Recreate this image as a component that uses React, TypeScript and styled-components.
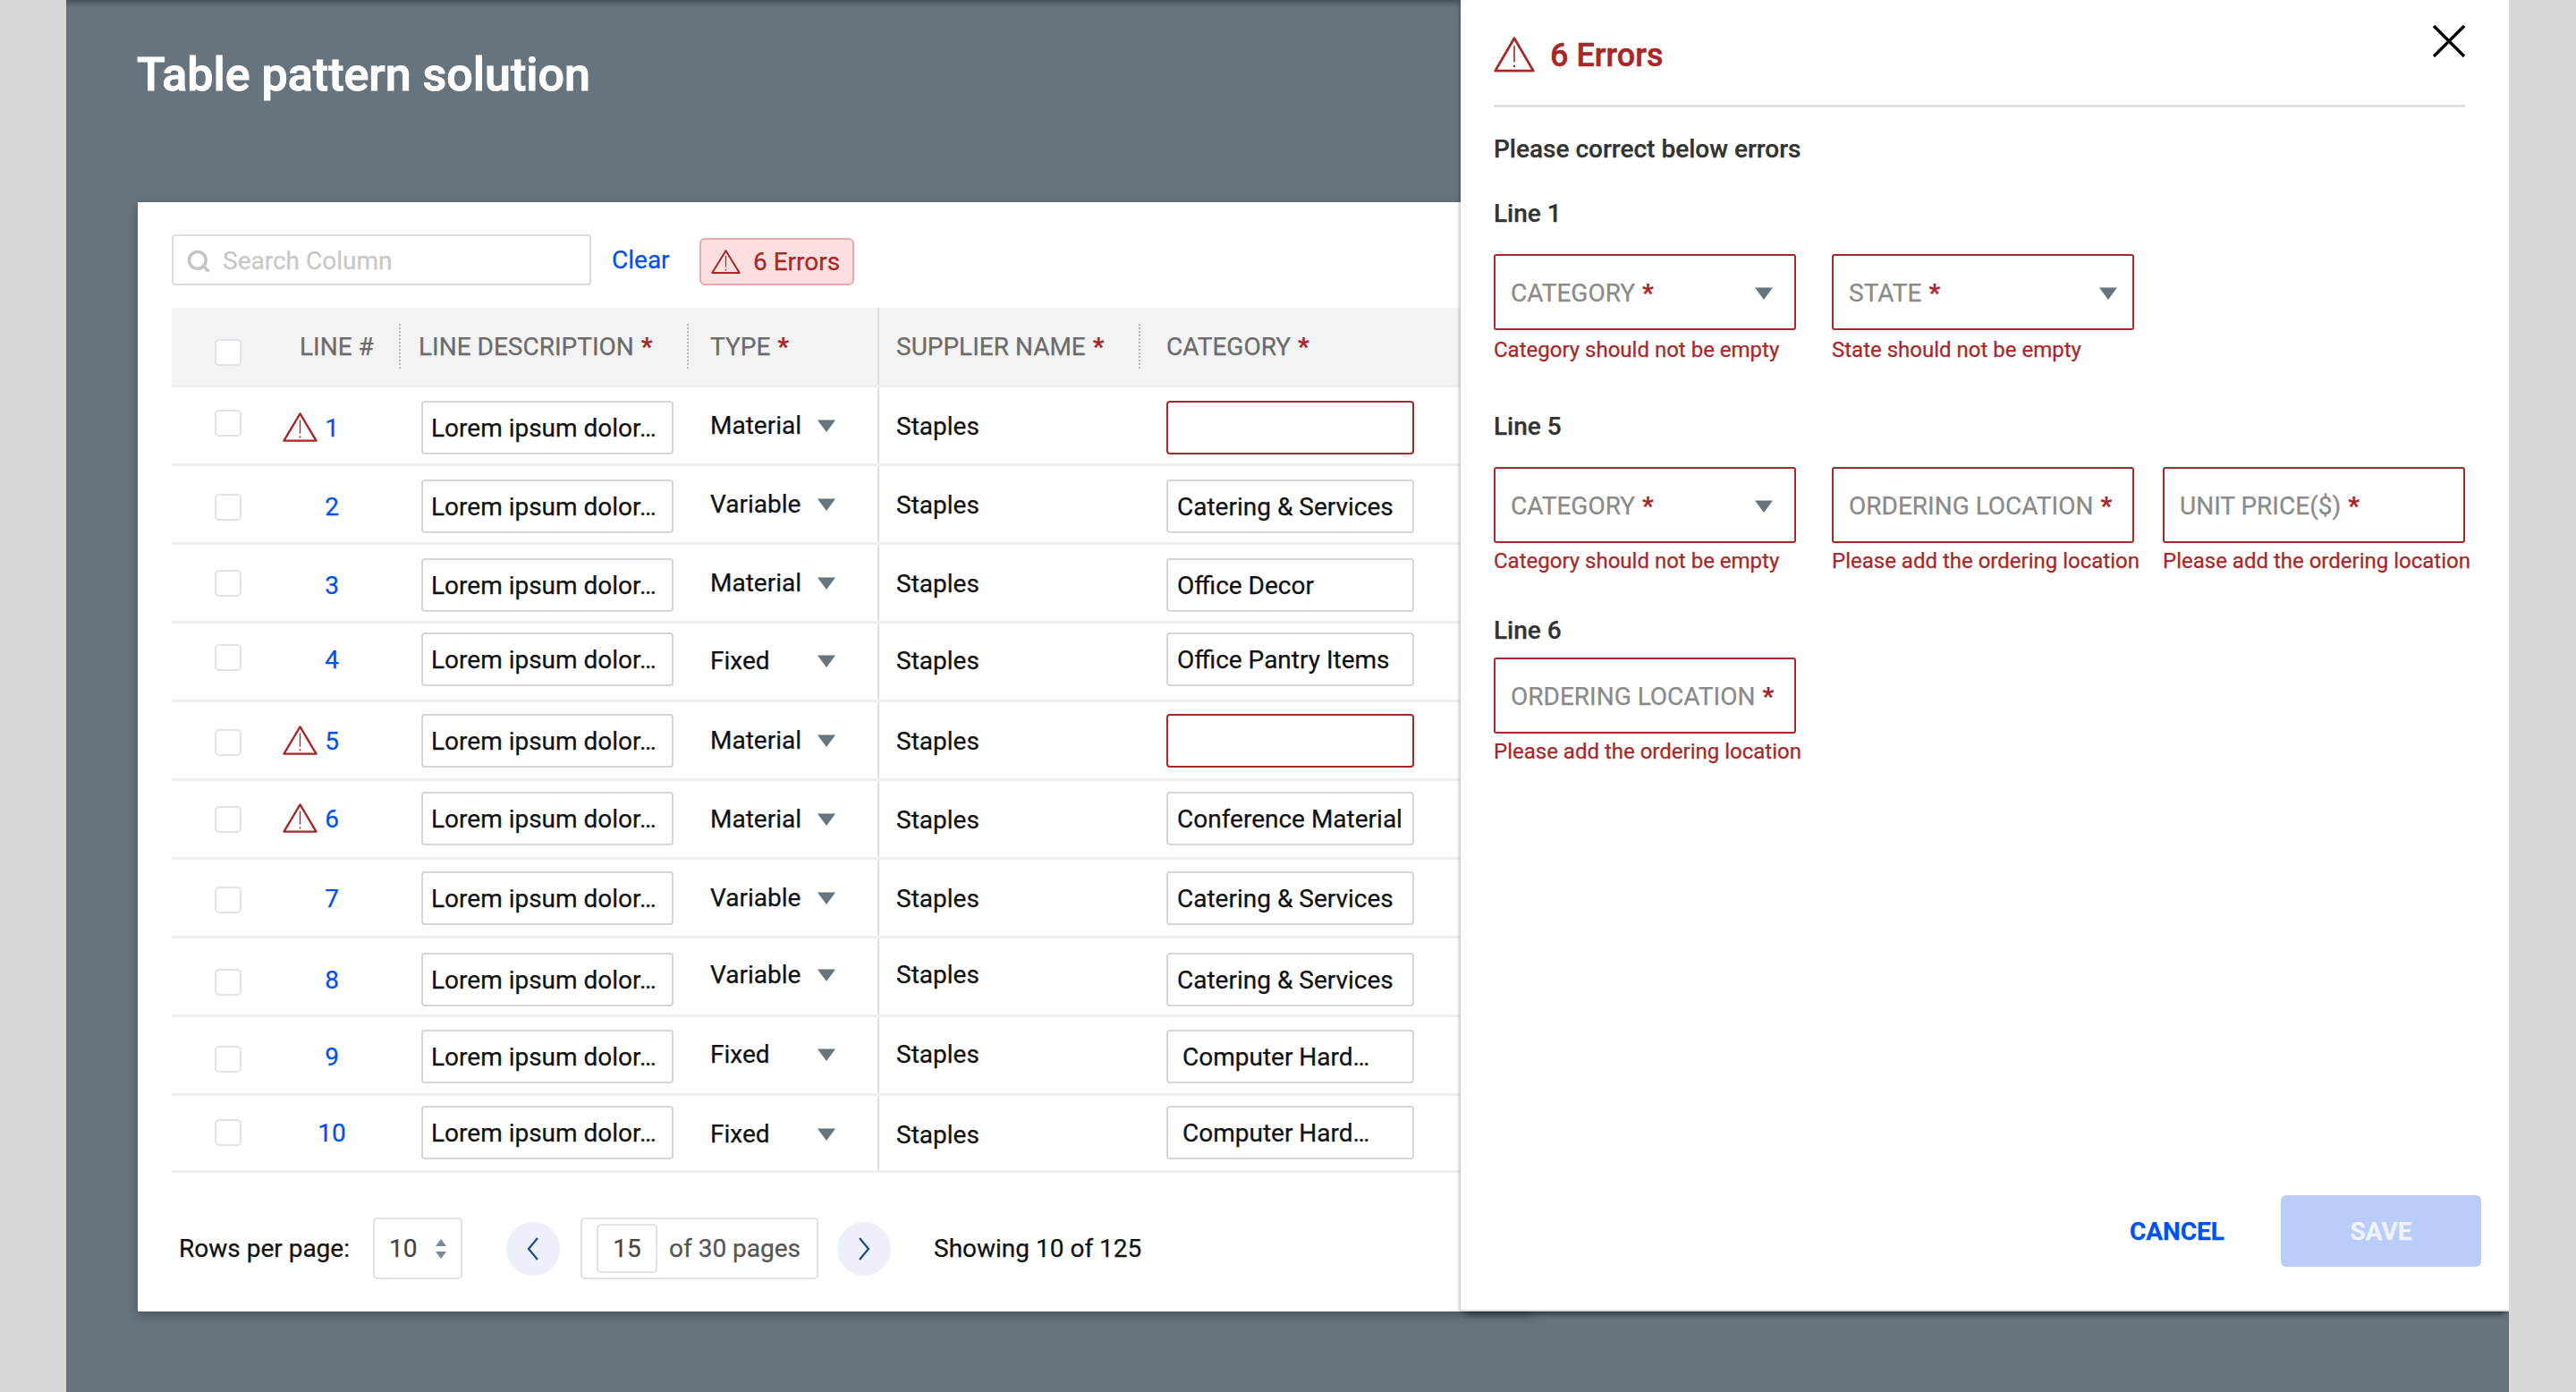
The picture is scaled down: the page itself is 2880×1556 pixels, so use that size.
import React from "react";
import styled, { createGlobalStyle } from "styled-components";
import { Search } from "lucide-react";

const RED = "#a62828";
const BLUE = "#0052ea";

const Global = createGlobalStyle`
  html, body { margin: 0; padding: 0; background: #d8d8d8; }
  body { font-family: Roboto, "Liberation Sans", sans-serif; -webkit-text-stroke: 0.25px; }
  * { box-sizing: border-box; }
`;

const Page = styled.div`
  width: 2880px;
  height: 1556px;
  background: #d8d8d8;
  overflow: hidden;
  padding-left: 74px;
`;

const Panel = styled.main`
  position: relative;
  width: 2731px;
  height: 1556px;
  background: #67737d;
  box-shadow: inset 0 7px 6px -4px rgba(20, 30, 40, 0.45);
  padding: 54px 0 0 79px;
  overflow: hidden;
`;

const Title = styled.h1`
  margin: 0 0 112px 0;
  font-size: 52px;
  line-height: 60px;
  font-weight: 500;
  color: #fff;
  -webkit-text-stroke: 1px #fff;
`;

const Card = styled.section`
  width: 1560px;
  height: 1240px;
  margin-left: 1px;
  background: #fff;
  padding: 36px 0 0 38px;
  box-shadow: 0 4px 10px rgba(20, 30, 40, 0.35);
`;

const Toolbar = styled.div`
  display: flex;
  align-items: flex-end;
  height: 57px;
  margin-bottom: 25px;
`;

const SearchBox = styled.div`
  width: 469px;
  height: 57px;
  border: 2px solid #dcdcdc;
  border-radius: 4px;
  display: flex;
  align-items: center;
  gap: 13px;
  padding: 2px 0 0 14px;
  font-size: 28px;
  color: #c8c8c8;
`;

const ClearLink = styled.a`
  margin-left: 23px;
  width: 98px;
  align-self: center;
  font-size: 28px;
  line-height: 32px;
  color: ${BLUE};
`;

const ErrorPill = styled.div`
  width: 173px;
  height: 53px;
  display: flex;
  align-items: center;
  gap: 14px;
  padding-left: 11px;
  background: #fddfdf;
  border: 2px solid #e8abab;
  border-radius: 6px;
  font-size: 28px;
  color: ${RED};
`;

const Grid = styled.div<{ $height: number; $head?: boolean }>`
  display: grid;
  grid-template-columns: 124px 130px 322px 213px 292px 1fr;
  align-items: center;
  height: ${(p) => p.$height}px;
  background: ${(p) => (p.$head ? "#f3f3f3" : "#fff")};
  border-bottom: 3px solid #eeeeee;
`;

const HeadCell = styled.div<{ $pad: number; $dotted?: boolean }>`
  height: 50px;
  display: flex;
  align-items: center;
  padding-left: ${(p) => p.$pad}px;
  padding-top: 1px;
  border-left: ${(p) => (p.$dotted ? "2px dotted #b9b9b9" : "none")};
  font-size: 28px;
  color: #6b6b6b;
  white-space: nowrap;
`;

const Star = styled.span`
  color: ${RED};
  font-weight: 700;
  margin-left: 8px;
`;

const shifted = (n: number) =>
  n >= 0 ? `margin-top: ${2 * n}px;` : `margin-bottom: ${-2 * n}px;`;

const CheckCell = styled.div<{ $shift: number }>`
  padding-left: 48px;
  ${(p) => shifted(p.$shift)}
`;

const CheckBox = styled.span`
  display: block;
  width: 30px;
  height: 30px;
  background: #fff;
  border: 2px solid #dfe3ee;
  border-radius: 5px;
`;

const LineCell = styled.div<{ $shift: number }>`
  display: flex;
  align-items: center;
  ${(p) => shifted(p.$shift)}
`;

const WarnSlot = styled.span`
  width: 40px;
  height: 34px;
  display: flex;
`;

const LineNo = styled.a`
  width: 30px;
  display: flex;
  justify-content: center;
  font-size: 28px;
  padding-top: 1px;
  color: ${BLUE};
`;

const DescCell = styled.div<{ $shift: number }>`
  padding-left: 25px;
  ${(p) => shifted(p.$shift)}
`;

const TextBox = styled.div<{ $width: number; $pad: number; $error?: boolean }>`
  width: ${(p) => p.$width}px;
  height: 60px;
  display: flex;
  align-items: center;
  padding: 2px 0 0 ${(p) => p.$pad}px;
  border: ${(p) => (p.$error ? `2px solid ${RED}` : "2px solid #d9d5d5")};
  border-radius: 4px;
  font-size: 28px;
  color: #111;
  white-space: nowrap;
`;

const TypeCell = styled.div<{ $shift: number }>`
  display: flex;
  align-items: center;
  padding-left: 26px;
  font-size: 28px;
  color: #111;
  ${(p) => shifted(p.$shift)}
`;

const TypeName = styled.span`
  width: 119px;
`;

const SupplierCell = styled.div<{ $shift: number }>`
  align-self: stretch;
  display: flex;
  align-items: center;
  padding-left: 19px;
  border-left: 2px solid #dddddd;
  font-size: 28px;
  color: #111;
  ${(p) => (p.$shift >= 0 ? `padding-top: ${2 * p.$shift + 1}px;` : `padding-bottom: ${-2 * p.$shift}px;`)}
`;

const HeadSupplier = styled(HeadCell)`
  align-self: stretch;
  height: auto;
  border-left: 2px solid #dddddd;
  padding-left: 19px;
`;

const CatCell = styled.div<{ $shift: number }>`
  padding-left: 31px;
  ${(p) => shifted(p.$shift)}
`;

const Footer = styled.div`
  display: flex;
  align-items: center;
  height: 69px;
  margin: 50px 0 0 8px;
  font-size: 28px;
  color: #111;
`;

const RowsLabel = styled.span`
  width: 217px;
`;

const RowsSelect = styled.div`
  width: 100px;
  height: 69px;
  display: flex;
  align-items: center;
  justify-content: space-between;
  padding: 0 16px 0 16px;
  border: 2px solid #dfe3ee;
  border-radius: 5px;
  color: #444;
`;

const Stepper = styled.span`
  display: flex;
  flex-direction: column;
  gap: 6px;
`;

const RoundBtn = styled.button<{ $left: number; $right: number }>`
  width: 60px;
  height: 60px;
  margin: 0 ${(p) => p.$right}px 0 ${(p) => p.$left}px;
  padding: 0;
  display: flex;
  align-items: center;
  justify-content: center;
  border: none;
  border-radius: 50%;
  background: #eef0f9;
`;

const PageGroup = styled.div`
  width: 266px;
  height: 69px;
  display: flex;
  align-items: center;
  padding-left: 16px;
  gap: 13px;
  border: 2px solid #e2e2e2;
  border-radius: 5px;
  color: #555;
`;

const PageInput = styled.span`
  width: 68px;
  height: 55px;
  display: flex;
  align-items: center;
  justify-content: center;
  border: 2px solid #e2e2e2;
  border-radius: 5px;
  color: #444;
`;

const Drawer = styled.aside`
  position: absolute;
  top: 0;
  right: 0;
  width: 1172px;
  height: 1466px;
  display: flex;
  flex-direction: column;
  padding: 0 49px 0 37px;
  background: #fff;
  border-bottom: 2px solid #dcdcdc;
  box-shadow: -2px 0 3px rgba(0, 0, 0, 0.18), 2px 0 3px rgba(0, 0, 0, 0.3), 0 9px 6px -5px rgba(30, 40, 50, 0.6);
`;

const DrawerHead = styled.header`
  height: 120px;
  display: flex;
  align-items: flex-start;
  padding-top: 41px;
  border-bottom: 3px solid #dfdfdf;
`;

const DrawerTitle = styled.h2`
  margin: 2px 0 0 17px;
  font-size: 36px;
  line-height: 38px;
  font-weight: 500;
  color: ${RED};
  -webkit-text-stroke: 0.5px ${RED};
`;

const CloseBtn = styled.button`
  margin: -13px 0 0 auto;
  padding: 0;
  border: none;
  background: none;
  width: 36px;
  height: 36px;
`;

const Instruction = styled.p`
  margin: 31px 0 0;
  font-size: 28px;
  line-height: 32px;
  font-weight: 500;
  color: #333;
`;

const Section = styled.section<{ $top: number }>`
  margin-top: ${(p) => p.$top}px;
`;

const SectionTitle = styled.h3`
  margin: 0;
  font-size: 28px;
  line-height: 32px;
  font-weight: 500;
  color: #333;
`;

const Fields = styled.div<{ $gap: number }>`
  margin-top: ${(p) => p.$gap}px;
  display: grid;
  grid-template-columns: 378px 370px 338px;
`;

const FieldBox = styled.div<{ $inset: number }>`
  width: 338px;
  height: 85px;
  display: flex;
  align-items: center;
  justify-content: space-between;
  padding: 2px ${(p) => p.$inset}px 0 17px;
  border: 2px solid ${RED};
  border-radius: 3px;
  font-size: 28px;
  color: #8a8a8a;
  white-space: nowrap;
`;

const ErrorText = styled.div<{ $top: number }>`
  margin-top: ${(p) => p.$top}px;
  font-size: 24px;
  line-height: 28px;
  color: ${RED};
  white-space: nowrap;
`;

const DrawerFooter = styled.footer`
  margin-top: auto;
  margin-bottom: 48px;
  margin-right: -18px;
  display: flex;
  align-items: center;
  justify-content: flex-end;
  gap: 63px;
`;

const CancelBtn = styled.button`
  padding: 0;
  border: none;
  background: none;
  font-family: inherit;
  font-size: 28px;
  font-weight: 700;
  color: ${BLUE};
`;

const SaveBtn = styled.button`
  width: 224px;
  height: 80px;
  border: none;
  border-radius: 6px;
  background: #b9cdf8;
  font-family: inherit;
  font-size: 28px;
  font-weight: 700;
  color: #eef3ff;
`;

const Warn = ({ w, h }: { w: number; h: number }) => (
  <svg width={w} height={h} viewBox="0 0 40 36" preserveAspectRatio="none" fill="none" stroke={RED}>
    <path d="M20 1.5 L38.5 33.5 H1.5 Z" strokeWidth="2.4" strokeLinejoin="round" />
    <path d="M20 9 V25" strokeWidth="1.4" />
    <path d="M20 28 V30" strokeWidth="1.8" />
  </svg>
);

const Caret = () => (
  <svg width="22" height="14" viewBox="0 0 22 14">
    <path d="M1 0.5 H21 L11 14 Z" fill="#67737d" />
  </svg>
);

const StepArrow = ({ up }: { up?: boolean }) => (
  <svg width="12" height="8" viewBox="0 0 12 8">
    <path d={up ? "M6 0 L12 8 H0 Z" : "M0 0 H12 L6 8 Z"} fill="#7b8a9a" />
  </svg>
);

const Chevron = ({ left }: { left?: boolean }) => (
  <svg width="16" height="26" viewBox="0 0 16 26" fill="none" stroke="#1d4a82" strokeWidth="2.2">
    <path d={left ? "M13 1 L3 13 L13 25" : "M3 1 L13 13 L3 25"} />
  </svg>
);

const CloseIcon = () => (
  <svg width="36" height="36" viewBox="0 0 36 36" stroke="#000" strokeWidth="3.4">
    <path d="M1 1 L35 35 M35 1 L1 35" />
  </svg>
);

type Row = {
  no: number;
  warn?: boolean;
  type: string;
  cat: string;
  catPad?: number;
  check: number;
  box: number;
  text: number;
};

const rows: Row[] = [
  { no: 1, warn: true, type: "Material", cat: "", check: -3, box: 2, text: 0 },
  { no: 2, type: "Variable", cat: "Catering & Services", check: 3, box: 2, text: 0 },
  { no: 3, type: "Material", cat: "Office Decor", check: 0, box: 2, text: 0 },
  { no: 4, type: "Fixed", cat: "Office Pantry Items", check: -5, box: -3, text: -1 },
  { no: 5, warn: true, type: "Material", cat: "", check: 2, box: 0, text: 0 },
  { no: 6, warn: true, type: "Material", cat: "Conference Material", check: 0, box: -1, text: 0 },
  { no: 7, type: "Variable", cat: "Catering & Services", check: 2, box: 0, text: 0 },
  { no: 8, type: "Variable", cat: "Catering & Services", check: 6, box: 3, text: -2 },
  { no: 9, type: "Fixed", cat: "Computer Hard…", catPad: 16, check: 4, box: 1, text: -1 },
  { no: 10, type: "Fixed", cat: "Computer Hard…", catPad: 16, check: -1, box: -1, text: 1 },
];

type FieldDef = { label: string; error: string; select?: boolean; inset?: number };

const sections: { title: string; top: number; gap: number; errTop: number; fields: FieldDef[] }[] = [
  {
    title: "Line 1",
    top: 40,
    gap: 29,
    errTop: 8,
    fields: [
      { label: "CATEGORY", error: "Category should not be empty", select: true, inset: 23 },
      { label: "STATE", error: "State should not be empty", select: true, inset: 16 },
    ],
  },
  {
    title: "Line 5",
    top: 56,
    gap: 29,
    errTop: 6,
    fields: [
      { label: "CATEGORY", error: "Category should not be empty", select: true, inset: 23 },
      { label: "ORDERING LOCATION", error: "Please add the ordering location" },
      { label: "UNIT PRICE($)", error: "Please add the ordering location" },
    ],
  },
  {
    title: "Line 6",
    top: 48,
    gap: 14,
    errTop: 6,
    fields: [{ label: "ORDERING LOCATION", error: "Please add the ordering location" }],
  },
];

export default function App() {
  return (
    <Page>
      <Global />
      <Panel>
        <Title>Table pattern solution</Title>
        <Card>
          <Toolbar>
            <SearchBox>
              <Search size={28} strokeWidth={3} color="#c4c4c4" />
              Search Column
            </SearchBox>
            <ClearLink>Clear</ClearLink>
            <ErrorPill>
              <Warn w={33} h={28} />
              6 Errors
            </ErrorPill>
          </Toolbar>

          <Grid $height={89} $head>
            <CheckCell $shift={7}>
              <CheckBox />
            </CheckCell>
            <HeadCell $pad={19}>LINE #</HeadCell>
            <HeadCell $pad={20} $dotted>
              LINE DESCRIPTION<Star>*</Star>
            </HeadCell>
            <HeadCell $pad={24} $dotted>
              TYPE<Star>*</Star>
            </HeadCell>
            <HeadSupplier $pad={19}>
              SUPPLIER NAME<Star>*</Star>
            </HeadSupplier>
            <HeadCell $pad={29} $dotted>
              CATEGORY<Star>*</Star>
            </HeadCell>
          </Grid>

          {rows.map((r) => (
            <Grid key={r.no} $height={r.no === 10 ? 86 : 88}>
              <CheckCell $shift={r.check}>
                <CheckBox />
              </CheckCell>
              <LineCell $shift={r.box}>
                <WarnSlot>{r.warn && <Warn w={39} h={34} />}</WarnSlot>
                <LineNo>{r.no}</LineNo>
              </LineCell>
              <DescCell $shift={r.box}>
                <TextBox $width={282} $pad={9}>Lorem ipsum dolor…</TextBox>
              </DescCell>
              <TypeCell $shift={r.text}>
                <TypeName>{r.type}</TypeName>
                <Caret />
              </TypeCell>
              <SupplierCell $shift={r.text}>Staples</SupplierCell>
              <CatCell $shift={r.box}>
                <TextBox $width={277} $pad={r.catPad ?? 10} $error={!r.cat}>
                  {r.cat}
                </TextBox>
              </CatCell>
            </Grid>
          ))}

          <Footer>
            <RowsLabel>Rows per page:</RowsLabel>
            <RowsSelect>
              10
              <Stepper>
                <StepArrow up />
                <StepArrow />
              </Stepper>
            </RowsSelect>
            <RoundBtn $left={49} $right={23}>
              <Chevron left />
            </RoundBtn>
            <PageGroup>
              <PageInput>15</PageInput>
              of 30 pages
            </PageGroup>
            <RoundBtn $left={21} $right={48}>
              <Chevron />
            </RoundBtn>
            Showing 10 of 125
          </Footer>
        </Card>

        <Drawer>
          <DrawerHead>
            <Warn w={46} h={41} />
            <DrawerTitle>6 Errors</DrawerTitle>
            <CloseBtn>
              <CloseIcon />
            </CloseBtn>
          </DrawerHead>
          <Instruction>Please correct below errors</Instruction>
          {sections.map((s) => (
            <Section key={s.title} $top={s.top}>
              <SectionTitle>{s.title}</SectionTitle>
              <Fields $gap={s.gap}>
                {s.fields.map((f) => (
                  <div key={f.label}>
                    <FieldBox $inset={f.inset ?? 16}>
                      <span>
                        {f.label}
                        <Star>*</Star>
                      </span>
                      {f.select && <Caret />}
                    </FieldBox>
                    <ErrorText $top={s.errTop}>{f.error}</ErrorText>
                  </div>
                ))}
              </Fields>
            </Section>
          ))}
          <DrawerFooter>
            <CancelBtn>CANCEL</CancelBtn>
            <SaveBtn>SAVE</SaveBtn>
          </DrawerFooter>
        </Drawer>
      </Panel>
    </Page>
  );
}
